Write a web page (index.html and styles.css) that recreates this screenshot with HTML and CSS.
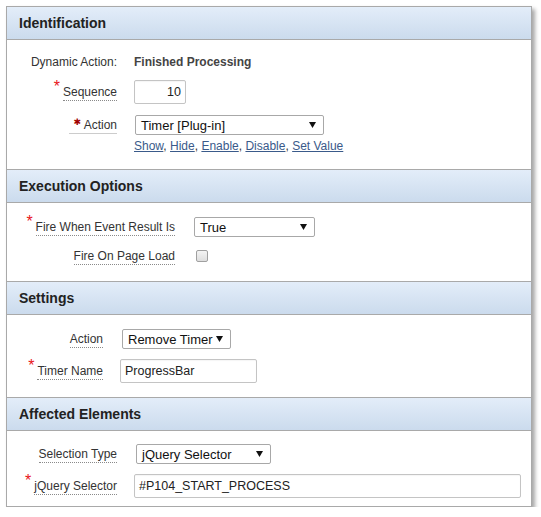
FILE: index.html
```html
<!DOCTYPE html>
<html>
<head>
<meta charset="utf-8">
<link rel="stylesheet" href="styles.css">
</head>
<body>
<div class="panel">
  <section class="section">
    <div class="sec-head">Identification</div>
    <div class="sec-body ident">
      <div class="row r-da">
        <div class="label"><span class="plain">Dynamic Action:</span></div>
        <div class="field"><span class="value">Finished Processing</span></div>
      </div>
      <div class="row r-seq">
        <div class="label"><span class="req">*</span><span class="lt">Sequence</span></div>
        <div class="field"><div class="input w-seq right">10</div></div>
      </div>
      <div class="row r-act">
        <div class="label"><span class="lt solid"><span class="req2">&#x2731;</span> Action</span></div>
        <div class="field"><div class="select w-act"><span>Timer [Plug-in]</span><svg class="arrow" width="7" height="6" viewBox="0 0 7 6"><polygon points="0,0 7,0 3.5,6" fill="#111"/></svg></div></div>
      </div>
      <div class="row r-links">
        <div class="label"></div>
        <div class="links"><a href="#">Show</a>, <a href="#">Hide</a>, <a href="#">Enable</a>, <a href="#">Disable</a>, <a href="#">Set Value</a></div>
      </div>
    </div>
  </section>
  <section class="section">
    <div class="sec-head">Execution Options</div>
    <div class="sec-body exec">
      <div class="row r-fire">
        <div class="label"><span class="req">*</span><span class="lt">Fire When Event Result Is</span></div>
        <div class="field"><div class="select w-fire"><span>True</span><svg class="arrow" width="7" height="6" viewBox="0 0 7 6"><polygon points="0,0 7,0 3.5,6" fill="#111"/></svg></div></div>
      </div>
      <div class="row r-load">
        <div class="label"><span class="lt">Fire On Page Load</span></div>
        <div class="field"><span class="checkbox"></span></div>
      </div>
    </div>
  </section>
  <section class="section">
    <div class="sec-head">Settings</div>
    <div class="sec-body settings">
      <div class="row r-sa">
        <div class="label"><span class="lt">Action</span></div>
        <div class="field"><div class="select w-sa"><span>Remove Timer</span><svg class="arrow" width="7" height="6" viewBox="0 0 7 6"><polygon points="0,0 7,0 3.5,6" fill="#111"/></svg></div></div>
      </div>
      <div class="row r-tn">
        <div class="label"><span class="req">*</span><span class="lt">Timer Name</span></div>
        <div class="field"><div class="input w-tn">ProgressBar</div></div>
      </div>
    </div>
  </section>
  <section class="section">
    <div class="sec-head">Affected Elements</div>
    <div class="sec-body affected">
      <div class="row r-st">
        <div class="label"><span class="lt">Selection Type</span></div>
        <div class="field"><div class="select w-st"><span>jQuery Selector</span><svg class="arrow" width="7" height="6" viewBox="0 0 7 6"><polygon points="0,0 7,0 3.5,6" fill="#111"/></svg></div></div>
      </div>
      <div class="row r-js">
        <div class="label"><span class="req">*</span><span class="lt">jQuery Selector</span></div>
        <div class="field"><div class="input w-js">#P104_START_PROCESS</div></div>
      </div>
    </div>
  </section>
</div>
</body>
</html>
```

FILE: styles.css
```css
html, body {
  margin: 0;
  padding: 0;
  background: #ffffff;
}
body {
  font-family: "Liberation Sans", Arial, sans-serif;
  font-size: 12px;
  color: #333;
}
.panel {
  margin: 6px 0 0 6px;
  width: 524px;
  border: 1px solid #a9a9a9;
  background: #fff;
  box-shadow: 3px 3px 4px rgba(0, 0, 0, 0.35);
}
.section + .section {
  border-top: 1px solid #a9a9a9;
}
.sec-head {
  height: 32px;
  line-height: 32px;
  padding-left: 12px;
  border-bottom: 1px solid #a9a9a9;
  background: linear-gradient(#e3edf9, #cbdbed);
  font-weight: bold;
  font-size: 14px;
  color: #222;
}
.sec-body {
  --lw: 110px;
}
.sec-body.exec { --lw: 168px; }
.sec-body.settings { --lw: 96px; }
.row {
  display: flex;
  align-items: center;
}
.label {
  width: var(--lw);
  flex: none;
  text-align: right;
  color: #333;
  white-space: nowrap;
  line-height: 14px;
}
.field {
  margin-left: 17px;
  display: flex;
  align-items: center;
}
.lt {
  border-bottom: 1px dotted #8a8a8a;
  padding-bottom: 1px;
}
.lt.solid {
  border-bottom: 1px solid #ccc;
  padding-left: 4px;
}
.req {
  color: #e8141a;
  font-size: 16px;
  line-height: 0;
  vertical-align: 4px;
  margin-right: 3px;
}
.req2 {
  color: #a00000;
  font-family: "DejaVu Sans", sans-serif;
  font-size: 9px;
  line-height: 0;
  vertical-align: 4px;
}
.value {
  font-weight: bold;
  color: #444;
}
.input {
  box-sizing: border-box;
  height: 24px;
  line-height: 22px;
  border: 1px solid #c4c4c4;
  border-radius: 2px;
  padding: 0 4px;
  font-size: 12.5px;
  color: #222;
  background: #fff;
  box-shadow: inset 0 1px 1px rgba(0,0,0,0.04);
}
.input.right { text-align: right; }
.select {
  box-sizing: border-box;
  height: 20px;
  margin-left: 1px;
  border: 1px solid #a8a8a8;
  border-radius: 2px;
  padding: 0 7px 0 5px;
  display: flex;
  align-items: center;
  justify-content: space-between;
  font-size: 13px;
  color: #111;
  background: #fff;
}
.arrow { flex: none; }
.checkbox {
  display: block;
  box-sizing: border-box;
  width: 12px;
  height: 12px;
  margin-left: 4px;
  border: 1px solid #a0a0a0;
  border-radius: 2px;
  background: linear-gradient(#f4f4f4, #dedede);
}
.links {
  margin-left: 17px;
  color: #333;
  white-space: nowrap;
}
.links a {
  color: #3a5a8a;
  text-decoration: underline;
}

/* widths */
.w-seq { width: 52px; }
.w-tn { width: 137px; }
.w-js { width: 387px; }
.w-act { width: 189px; }
.w-fire { width: 121px; margin-left: 2px; }
.w-sa { width: 109px; margin-left: 2px; }
.w-st { width: 135px; margin-left: 2px; }

/* vertical rhythm */
.ident { padding: 12px 0 16px; }
.r-da { height: 20px; }
.r-seq { margin-top: 8px; height: 24px; }
.r-act { margin-top: 11px; height: 20px; }
.r-links { margin-top: 4px; height: 14px; }

.exec { padding: 14px 0 15px; }
.r-fire { height: 20px; }
.r-load { margin-top: 9px; height: 20px; }

.settings { padding: 14px 0 14px; }
.r-sa { height: 20px; }
.r-tn { margin-top: 10px; height: 24px; }

.affected { padding: 13px 0 8px; }
.r-st { height: 20px; }
.r-js { margin-top: 10px; height: 24px; }
```
